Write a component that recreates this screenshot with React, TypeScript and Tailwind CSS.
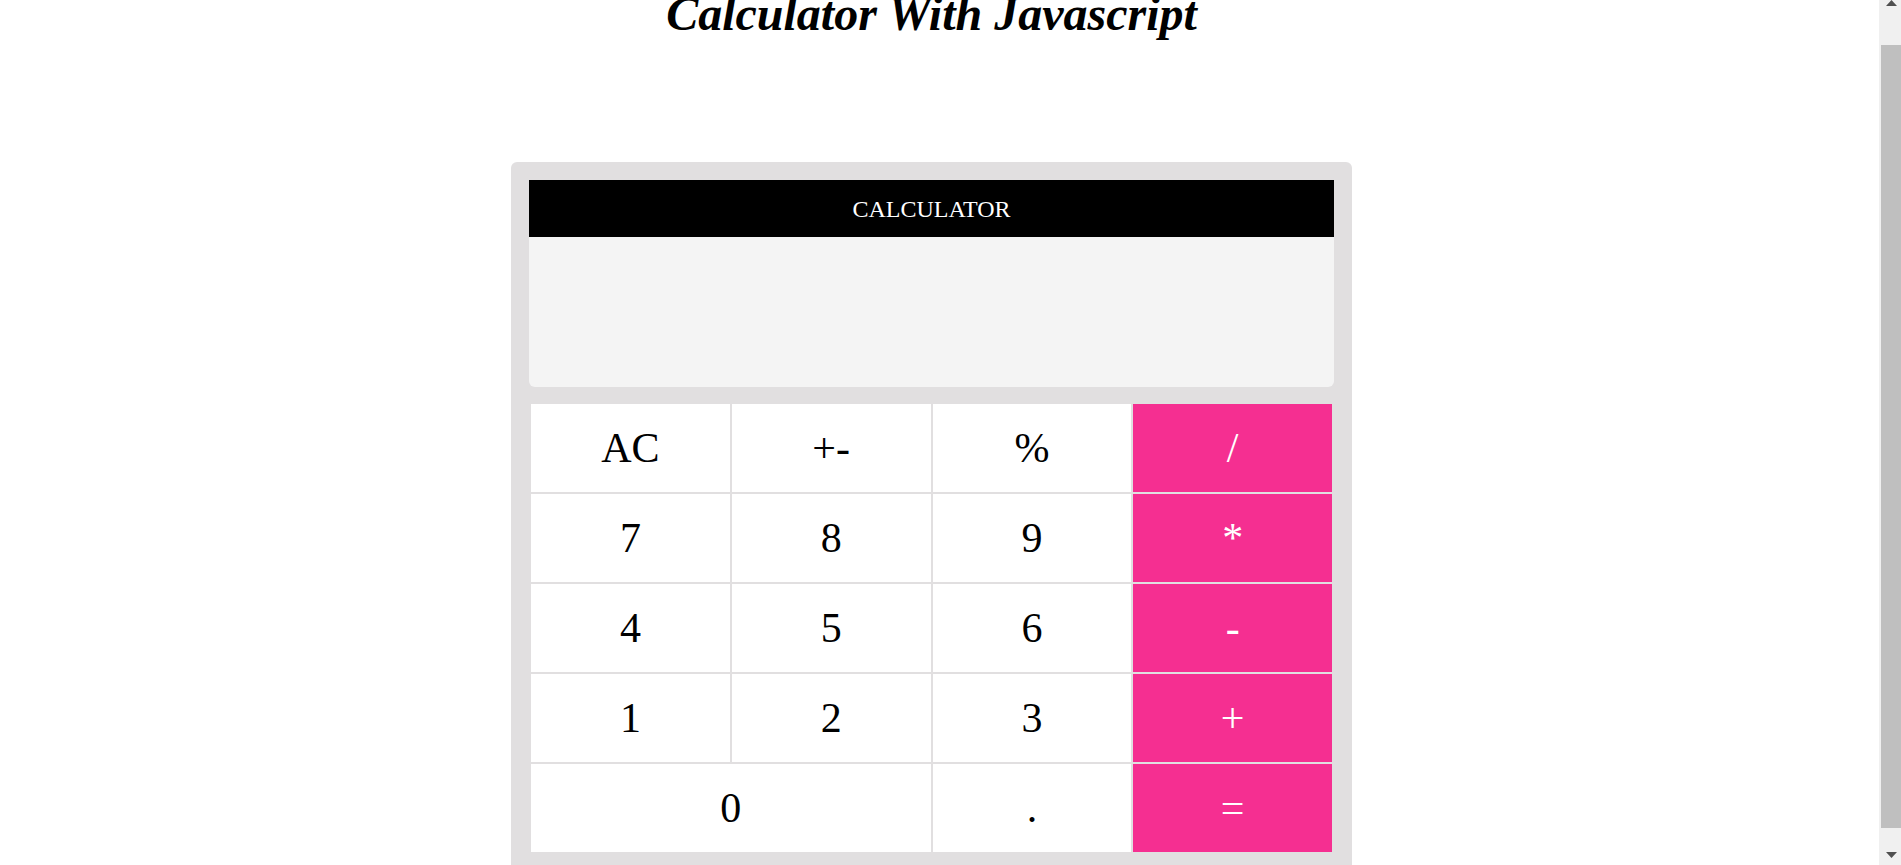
import { useLayoutEffect, useRef } from "react"

type Key = { label: string; op?: boolean; wide?: boolean }

const keys: Key[] = [
  { label: "AC" },
  { label: "+-" },
  { label: "%" },
  { label: "/", op: true },
  { label: "7" },
  { label: "8" },
  { label: "9" },
  { label: "*", op: true },
  { label: "4" },
  { label: "5" },
  { label: "6" },
  { label: "-", op: true },
  { label: "1" },
  { label: "2" },
  { label: "3" },
  { label: "+", op: true },
  { label: "0", wide: true },
  { label: "." },
  { label: "=", op: true },
]

function CalcKey({ label, op, wide }: Key) {
  return (
    <button
      className={
        "flex h-[88px] items-center justify-center text-[42px] leading-none " +
        (op ? "bg-[#f52f91] text-white " : "bg-white text-black ") +
        (wide ? "col-span-2" : "")
      }
    >
      {label}
    </button>
  )
}

// browser scrollbar as it shows in the screenshot
function FakeScrollbar() {
  return (
    <div className="flex w-[22px] shrink-0 flex-col bg-[#f0f0f0]">
      <div className="flex h-[6px] justify-center pl-[3px]">
        <svg width="11" height="6" viewBox="0 0 11 6">
          <path d="M5.5 0 L11 6 L0 6 Z" fill="#505050" />
        </svg>
      </div>
      <div className="mt-[39px] ml-[2px] h-[783px] bg-[#bfbfbf]" />
      <div className="mt-[24px] flex h-[6px] justify-center pl-[3px]">
        <svg width="11" height="6" viewBox="0 0 11 6">
          <path d="M0 0 L11 0 L5.5 6 Z" fill="#505050" />
        </svg>
      </div>
    </div>
  )
}

export default function App() {
  const scroller = useRef<HTMLDivElement>(null)

  // the reference is scrolled a little down the page
  useLayoutEffect(() => {
    if (scroller.current) scroller.current.scrollTop = 31
  }, [])

  return (
    <div
      className="flex h-screen overflow-hidden bg-white text-black"
      style={{ fontFamily: '"Liberation Serif", "Times New Roman", serif' }}
    >
      <div ref={scroller} className="flex-1 overflow-hidden">
        <div className="w-[1863px] pt-[17px] pb-[16px]">
          <h1 className="text-center text-5xl leading-[55px] font-bold italic">Calculator With Javascript</h1>

          <div className="mx-auto mt-[121px] w-[841px] rounded-md bg-[#e1dfe0] p-[18px]">
            <div className="flex h-[57px] items-center justify-center bg-black text-[24px] text-white">
              CALCULATOR
            </div>
            <div className="h-[150px] rounded-b-md bg-[#f4f4f4]" />

            <div className="mt-[15px] grid grid-cols-4 gap-[2px] p-[2px]">
              {keys.map((k) => (
                <CalcKey key={k.label} {...k} />
              ))}
            </div>
          </div>
        </div>
      </div>
      <FakeScrollbar />
    </div>
  )
}
